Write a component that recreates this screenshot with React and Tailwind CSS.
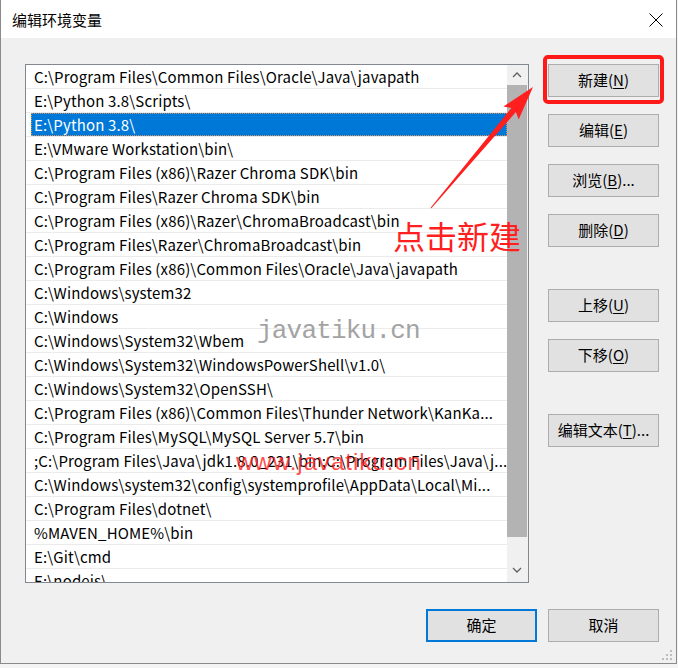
import React from "react";

const rows = [
  "C:\\Program Files\\Common Files\\Oracle\\Java\\javapath",
  "E:\\Python 3.8\\Scripts\\",
  "E:\\Python 3.8\\",
  "E:\\VMware Workstation\\bin\\",
  "C:\\Program Files (x86)\\Razer Chroma SDK\\bin",
  "C:\\Program Files\\Razer Chroma SDK\\bin",
  "C:\\Program Files (x86)\\Razer\\ChromaBroadcast\\bin",
  "C:\\Program Files\\Razer\\ChromaBroadcast\\bin",
  "C:\\Program Files (x86)\\Common Files\\Oracle\\Java\\javapath",
  "C:\\Windows\\system32",
  "C:\\Windows",
  "C:\\Windows\\System32\\Wbem",
  "C:\\Windows\\System32\\WindowsPowerShell\\v1.0\\",
  "C:\\Windows\\System32\\OpenSSH\\",
  "C:\\Program Files (x86)\\Common Files\\Thunder Network\\KanKa...",
  "C:\\Program Files\\MySQL\\MySQL Server 5.7\\bin",
  ";C:\\Program Files\\Java\\jdk1.8.0_231\\bin;C:\\Program Files\\Java\\j...",
  "C:\\Windows\\system32\\config\\systemprofile\\AppData\\Local\\Mi...",
  "C:\\Program Files\\dotnet\\",
  "%MAVEN_HOME%\\bin",
  "E:\\Git\\cmd",
  "E:\\nodejs\\",
];

function Btn({ label, k, suffix = "", primary = false, className = "" }) {
  return (
    <div
      className={
        "w-[111px] h-[33px] flex items-center justify-center bg-[#e1e1e1] text-[15px] text-black " +
        (primary ? "border-2 border-[#0078d7] " : "border border-[#adadad] ") +
        className
      }
    >
      <span>
        {label}
        {k !== undefined ? (
          <>
            (<span className="underline underline-offset-2">{k}</span>){suffix}
          </>
        ) : null}
      </span>
    </div>
  );
}

export default function App() {
  return (
    <div
      className="w-[678px] h-[668px] bg-[#f4f4f4] relative overflow-hidden"
      style={{ fontFamily: '"Noto Sans CJK SC", "Noto Sans", sans-serif' }}
    >
      <div className="w-[677px] h-[664px] border-x border-b border-[#8a8a8a] bg-[#f0f0f0] flex flex-col relative">
        {/* title bar */}
        <div className="h-[38px] bg-white flex items-center justify-between pl-[11px] pr-[13px] shrink-0">
          <span className="text-[15px] text-black leading-none">编辑环境变量</span>
          <svg width="14" height="14" viewBox="0 0 14 14" className="mt-[1px]">
            <path d="M0.5 0.5 L13.5 13.5 M13.5 0.5 L0.5 13.5" stroke="#000" strokeWidth="1" />
          </svg>
        </div>

        {/* body */}
        <div className="flex flex-col pl-[24px] pt-[26px]">
          <div className="flex">
            {/* list */}
            <div className="w-[504px] h-[519px] border border-[#828790] bg-white flex overflow-hidden">
              <div className="w-[481px] flex flex-col">
                {rows.map((r, i) => (
                  <div key={i} className="h-[24px] shrink-0 border-b border-[#ebebeb] flex">
                    <div
                      className={
                        "ml-[5px] flex-1 flex items-center pl-[3px] whitespace-nowrap overflow-hidden text-[15px] tracking-[0.15px] leading-none " +
                        (i === 2
                          ? "bg-[#0078d7] text-white outline outline-1 outline-dotted outline-[#d09060] -outline-offset-1"
                          : "text-black")
                      }
                    >
                      {r}
                    </div>
                  </div>
                ))}
              </div>
              {/* scrollbar */}
              <div className="w-[21px] bg-[#f0f0f0] flex flex-col items-start">
                <div className="h-[20px] w-[20px] flex items-center justify-center">
                  <svg width="10" height="6" viewBox="0 0 10 6">
                    <path d="M1 5 L5 1 L9 5" stroke="#606060" strokeWidth="1.3" fill="none" />
                  </svg>
                </div>
                <div className="w-[20px] h-[452px] bg-[#b3b3b3]" />
                <div className="flex-1 w-[20px] flex items-end justify-center pb-[9px]">
                  <svg width="10" height="6" viewBox="0 0 10 6">
                    <path d="M1 1 L5 5 L9 1" stroke="#606060" strokeWidth="1.3" fill="none" />
                  </svg>
                </div>
              </div>
            </div>

            {/* buttons */}
            <div className="ml-[19px] flex flex-col">
              <Btn label="新建" k="N" />
              <Btn label="编辑" k="E" className="mt-[17px]" />
              <Btn label="浏览" k="B" suffix="..." className="mt-[17px]" />
              <Btn label="删除" k="D" className="mt-[17px]" />
              <Btn label="上移" k="U" className="mt-[42px]" />
              <Btn label="下移" k="O" className="mt-[17px]" />
              <Btn label="编辑文本" k="T" suffix="..." className="mt-[42px]" />
            </div>
          </div>

          {/* bottom buttons */}
          <div className="flex justify-end pr-[17px] mt-[26px] gap-[11px]">
            <Btn label="确定" primary />
            <Btn label="取消" />
          </div>
        </div>

        {/* size grip */}
        <svg className="absolute right-[3px] bottom-[2px]" width="11" height="11" viewBox="0 0 11 11">
          <rect x="8" y="0" width="2" height="2" fill="#bdbdbd" />
          <rect x="4" y="4" width="2" height="2" fill="#bdbdbd" />
          <rect x="8" y="4" width="2" height="2" fill="#bdbdbd" />
          <rect x="0" y="8" width="2" height="2" fill="#bdbdbd" />
          <rect x="4" y="8" width="2" height="2" fill="#bdbdbd" />
          <rect x="8" y="8" width="2" height="2" fill="#bdbdbd" />
        </svg>
      </div>

      {/* annotation overlays */}
      <div className="absolute left-[543px] top-[55px] w-[121px] h-[49px] border-[4px] border-[#ff1a1a] rounded-[5px]" />
      <svg className="absolute left-0 top-0 pointer-events-none" width="678" height="668">
        <polygon
          points="431.4,208.3 515.9,111.9 518.7,119.4 533,87 503.4,106.5 511.4,108 430.6,207.7"
          fill="#ff1f1f"
        />
      </svg>
      <div className="absolute left-[393px] top-[219px] text-[32px] leading-none text-[#ff1f1f]">
        点击新建
      </div>
      <div
        className="absolute left-[257px] top-[318px] text-[26px] tracking-[-0.8px] leading-none text-[#a3a3a3]"
        style={{ fontFamily: '"Liberation Mono", monospace' }}
      >
        javatiku.cn
      </div>
      <div
        className="absolute left-[236px] top-[450px] text-[24px] tracking-[1px] leading-none text-[#ff2020]/80"
        style={{ fontFamily: '"Liberation Sans", sans-serif' }}
      >
        www.javatiku.cn
      </div>
    </div>
  );
}
